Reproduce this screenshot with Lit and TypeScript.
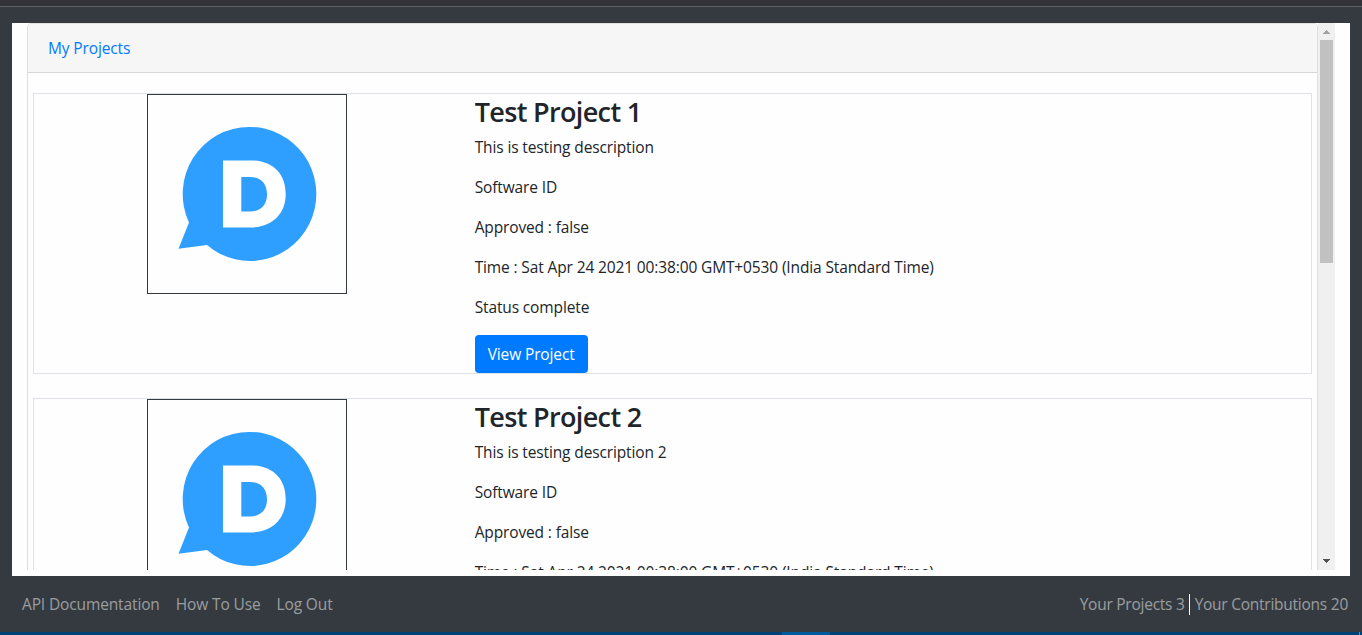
import { LitElement, html, css, svg } from "lit";
import { customElement, property } from "lit/decorators.js";

interface Project {
  name: string;
  description: string;
}

const PROJECTS: Project[] = [
  { name: "Test Project 1", description: "This is testing description" },
  { name: "Test Project 2", description: "This is testing description 2" },
];

@customElement("project-logo")
class ProjectLogo extends LitElement {
  static styles = css`
    :host { display: block; box-sizing: border-box; width: 200px; height: 200px; border: 1px solid #343a40; }
    svg { display: block; }
  `;
  render() {
    return html`<svg width="198" height="198" viewBox="0 0 198 198">
      <path fill="#2e9fff" d="M101.500 32 A66.300 67 0 1 1 59 150 L30.500 153.800 L41 127.500 A66.300 67 0 0 1 101.500 32 Z"/>
      <path fill="#fff" fill-rule="evenodd" d="M75 65.500 H103 C125 65.500 137.700 79 137.700 99 C137.700 119 124 132.500 102 132.500 H75 Z M93.300 82 V116.500 H102 C112.500 116.500 119 110 119 99.500 C119 88.500 112.500 82 102 82 Z"/>
    </svg>`;
  }
}

@customElement("project-row")
class ProjectRow extends LitElement {
  @property() name = "";
  @property() description = "";

  static styles = css`
    :host { display: flex; height: 279px; border: 1px solid #dee2e6; }
    .picture { flex: 0 0 33.3333%; display: flex; justify-content: center; align-items: flex-start; }
    .info { padding-left: 15px; white-space: nowrap; }
    h3 { margin: 0 0 5px; font-size: 27px; font-weight: 600; line-height: 36px; letter-spacing: -0.65px; }
    p { margin: 0 0 16px; line-height: 24px; }
    button { display: block; box-sizing: border-box; width: 113px; height: 38px; padding: 0; border: 0;
      border-radius: 4px; background: #007bff; color: #fff; font: inherit; letter-spacing: inherit; }
  `;
  render() {
    return html`
      <div class="picture"><project-logo></project-logo></div>
      <div class="info">
        <h3>${this.name}</h3>
        <p>${this.description}</p>
        <p>Software ID</p>
        <p>Approved : false</p>
        <p>Time : Sat Apr 24 2021 00:38:00 GMT+0530 (India Standard Time)</p>
        <p>Status complete</p>
        <button>View Project</button>
      </div>`;
  }
}

@customElement("app-root")
class AppRoot extends LitElement {
  static styles = css`
    :host { display: flex; flex-direction: column; height: 635px; overflow: hidden; background: #343a40;
      color: #212529; font: 15.500px/24px "Open Sans", "Noto Sans", sans-serif; letter-spacing: -0.13px; }
    .top { flex: 0 0 6px; background: #343438; border-bottom: 1px solid #606064; }
    .panel { flex: 0 0 547px; margin: 16px 12px 0; padding: 0 15px 6px; background: #fefefe; display: flex; }
    .view { flex: 1; height: 547px; overflow: hidden; }
    .card { box-sizing: border-box; height: 700px; border: 1px solid #dfdfdf; border-radius: 4px; background: #fefefe; }
    .header { box-sizing: border-box; height: 49px; padding: 12px 20px; background: #f6f6f6;
      border-bottom: 1px solid #d6d6d6; border-radius: 3px 3px 0 0; color: #007bff; }
    .list { display: grid; gap: 24px; padding: 20px 5px; }
    .scroll { flex: 0 0 17px; height: 547px; background: #f0f0f0; display: flex; flex-direction: column; }
    .arrow { flex: 0 0 17px; display: block; }
    .thumb { width: 13px; height: 223px; margin: 0 2px auto; background: #c1c1c1; }
    .footer { flex: 1; display: flex; align-items: center; padding: 0 14px 0 22px; color: rgba(255,255,255,.5); white-space: nowrap; }
    .links { display: flex; gap: 16px; margin-right: auto; }
    .count { letter-spacing: -0.25px; }
    .count + .count { border-left: 1px solid #fff; margin-left: 4px; padding-left: 5px; line-height: 21px; }
    .taskbar { flex: 0 0 3px; display: flex; background: #004275; }
    .active { width: 48px; margin-left: 782px; background: #005a9e; }
    .peek { width: 1px; margin-left: 529px; background: #6489a9; }
  `;
  render() {
    return html`
      <div class="top"></div>
      <div class="panel">
        <div class="view">
          <div class="card">
            <div class="header">My Projects</div>
            <div class="list">
              ${PROJECTS.map((p) => html`<project-row .name=${p.name} .description=${p.description}></project-row>`)}
            </div>
          </div>
        </div>
        <div class="scroll">
          <svg class="arrow" width="17" height="17" shape-rendering="crispEdges">${svg`<path d="M5 11 L8.500 7 L12 11 Z" fill="#a3a3a3"/>`}</svg>
          <div class="thumb"></div>
          <svg class="arrow" width="17" height="17" shape-rendering="crispEdges">${svg`<path d="M5 6 L8.500 10 L12 6 Z" fill="#505050"/>`}</svg>
        </div>
      </div>
      <div class="footer">
        <div class="links"><span>API Documentation</span><span>How To Use</span><span>Log Out</span></div>
        <span class="count">Your Projects 3</span><span class="count">Your Contributions 20</span>
      </div>
      <div class="taskbar"><div class="active"></div><div class="peek"></div></div>`;
  }
}
